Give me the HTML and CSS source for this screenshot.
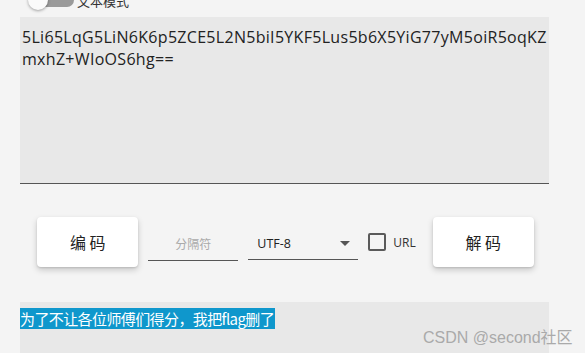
FILE: index.html
```html
<!DOCTYPE html>
<html>
<head>
<meta charset="utf-8">
<link rel="stylesheet" href="styles.css">
</head>
<body>
<div class="page">
  <div class="mode-row">
    <span class="switch"><span class="track"></span><span class="thumb"></span></span>
    <span class="mode-label">文本模式</span>
  </div>
  <div class="input-area">5Li65LqG5LiN6K6p5ZCE5L2N5biI5YKF5Lus5b6X5YiG77yM5oiR5oqKZmxhZ+WIoOS6hg==</div>
  <div class="controls">
    <button class="btn">编 码</button>
    <div class="field sep"><span class="placeholder">分隔符</span></div>
    <div class="field select"><span class="value">UTF-8</span><svg class="arrow" width="10" height="5" viewBox="0 0 10 5"><path d="M0 0 L10 0 L5 5 Z" fill="#555"/></svg></div>
    <label class="check"><span class="box"></span><span class="check-label">URL</span></label>
    <button class="btn">解 码</button>
  </div>
  <div class="output-area">
    <span class="sel">为了不让各位师傅们得分，我把flag删了</span>
    <span class="watermark">CSDN @second社区</span>
  </div>
</div>
</body>
</html>
```
FILE: styles.css
```css
html, body {
  margin: 0;
  padding: 0;
  background: #f4f4f4;
  overflow: hidden;
  height: 353px;
}
body {
  font-family: "Open Sans", "Noto Sans CJK SC", sans-serif;
  color: #222;
}
.page {
  width: 529px;
  padding-left: 20px;
}
.mode-row {
  display: flex;
  align-items: center;
  height: 22px;
  margin-top: -11px;
  margin-bottom: 6px;
}
.switch {
  position: relative;
  width: 40px;
  height: 22px;
  margin-left: 8px;
}
.track {
  position: absolute;
  left: 10px;
  top: 4px;
  width: 36px;
  height: 14px;
  border-radius: 7px;
  background: #9a9a9a;
}
.thumb {
  position: absolute;
  left: 0;
  top: 1px;
  width: 20px;
  height: 20px;
  border-radius: 50%;
  background: #fafafa;
  box-shadow: 0 1px 3px rgba(0,0,0,0.35);
}
.mode-label {
  margin-left: 9px;
  font-size: 13px;
  color: #333;
  font-family: "Noto Sans CJK SC", sans-serif;
}
.input-area {
  height: 157px;
  background: #e8e8e8;
  border-bottom: 1px solid #555;
  padding: 9px 2px 0 2px;
  font-size: 16px;
  line-height: 22px;
  word-break: break-all;
  color: #222;
  letter-spacing: 0.3px;
}
.controls {
  display: flex;
  align-items: center;
  justify-content: center;
  gap: 10px;
  margin-top: 33px;
  padding-left: 2px;
}
.btn {
  width: 101px;
  height: 50px;
  border: none;
  border-radius: 4px;
  background: #fff;
  box-shadow: 0 3px 6px rgba(0,0,0,0.18), 0 1px 2px rgba(0,0,0,0.12);
  font-family: "Noto Sans CJK SC", sans-serif;
  font-size: 16px;
  color: #222;
  padding: 0;
}
.field {
  height: 32px;
  border-bottom: 1px solid #555;
  display: flex;
  align-items: center;
  margin-top: 4px;
}
.sep {
  width: 90px;
  justify-content: center;
}
.placeholder {
  font-family: "Noto Sans CJK SC", sans-serif;
  font-size: 12px;
  color: #aaa;
}
.select {
  width: 110px;
  padding: 0 8px 0 9px;
  box-sizing: border-box;
  justify-content: space-between;
}
.value {
  font-size: 12.5px;
  color: #222;
}
.arrow {
  display: block;
}
.check {
  display: flex;
  align-items: center;
  gap: 7px;
  margin-right: 7px;
}
.box {
  width: 14px;
  height: 14px;
  border: 2px solid #5a5a5a;
  border-radius: 2px;
}
.check-label {
  font-size: 12px;
  color: #333;
}
.output-area {
  position: relative;
  margin-top: 35px;
  height: 60px;
  background: #e8e8e8;
  padding-top: 6px;
  box-sizing: border-box;
}
.sel {
  background: #0f97cc;
  color: #fff;
  font-family: "Noto Sans CJK SC", sans-serif;
  font-size: 15px;
  line-height: 22px;
  padding: 0 1px 0 0;
  letter-spacing: -0.6px;
}
.watermark {
  position: absolute;
  left: 403px;
  top: 22px;
  font-family: "Liberation Sans", "Noto Sans CJK SC", sans-serif;
  font-size: 16px;
  color: #aaa;
  white-space: nowrap;
  letter-spacing: 0;
}
```
